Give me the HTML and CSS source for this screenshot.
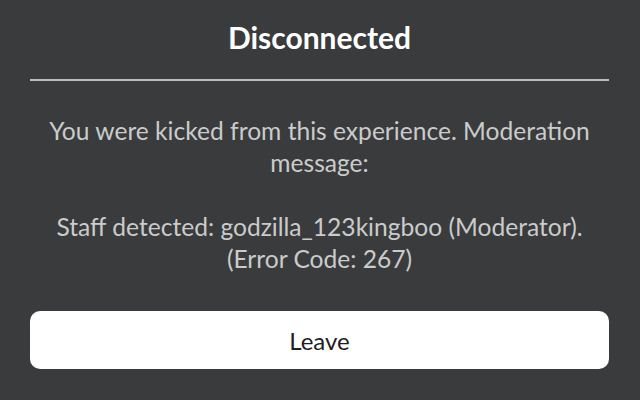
FILE: index.html
```html
<!DOCTYPE html>
<html lang="en">
<head>
    <meta charset="UTF-8">
    <meta name="viewport" content="width=device-width, initial-scale=1.0">
    <title>Disconnected</title>
    <link rel="stylesheet" href="styles.css">
</head>
<body>
    <div class="dialog">
        <h1 class="title">Disconnected</h1>
        <div class="divider"></div>

        <div class="message">
            <p>You were kicked from this experience. Moderation message:</p>
            <p>Staff detected: godzilla_123kingboo (Moderator).<br>(Error Code: 267)</p>
        </div>

        <button class="leave-button">Leave</button>
    </div>
</body>
</html>
```

FILE: styles.css
```css
html, body {
    margin: 0;
    height: 100%;
}
body {
    font-family: Lato, 'Open Sans', sans-serif;
    background-color: #393b3d;
}
.dialog {
    padding: 0 31px 0 30px;
}
.title {
    color: #ffffff;
    font-size: 30px;
    font-weight: 700;
    text-align: center;
    margin: 0;
    padding-top: 19px;
    line-height: 36px;
}
.divider {
    height: 2px;
    background-color: #bdbdbd;
    margin-top: 24px;
}
.message {
    color: #cbcbcb;
    font-size: 24.6px;
    line-height: 32px;
    text-align: center;
    margin-top: 34px;
    display: flex;
    flex-direction: column;
    gap: 32px;
}
.message p {
    margin: 0;
}
.leave-button {
    display: block;
    width: 100%;
    height: 58px;
    margin-top: 36px;
    background-color: #ffffff;
    border: none;
    border-radius: 10px;
    font-family: inherit;
    font-size: 24px;
    color: #1e1e1e;
    cursor: pointer;
}
```
